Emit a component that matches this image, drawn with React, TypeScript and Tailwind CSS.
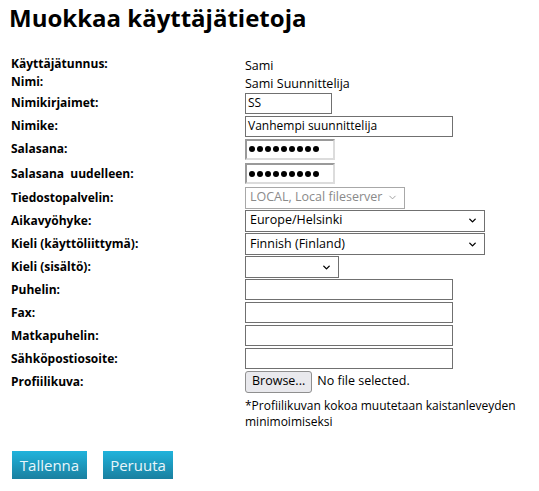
import { ChevronDown } from "lucide-react";

const font = { fontFamily: '"Open Sans", "Noto Sans", sans-serif' };

function TextBox({ w, value }: { w: string; value?: string }) {
  return (
    <div className={`flex h-[21px] items-center border border-[#707070] bg-white pl-[2px] text-[12px] text-black ${w}`}>
      {value}
    </div>
  );
}

function PasswordBox() {
  return (
    <div className="flex h-[21px] w-[90px] items-center gap-[2px] border-2 border-t-[#9a9a9a] border-l-[#9a9a9a] border-r-[#dcdcdc] border-b-[#dcdcdc] bg-white pl-[2px]">
      {Array.from({ length: 9 }).map((_, i) => (
        <span key={i} className="h-[6px] w-[6px] rounded-full bg-black" />
      ))}
    </div>
  );
}

function SelectBox({ w, value, disabled }: { w: string; value?: string; disabled?: boolean }) {
  return (
    <div
      className={`flex h-[22px] items-center justify-between border bg-white pl-[4px] pr-[6px] text-[12.5px] ${w} ${
        disabled ? "border-[#a8a8a8] text-[#8a8a8a]" : "border-[#707070] text-black"
      }`}
    >
      <span>{value}</span>
      <ChevronDown size={11} strokeWidth={disabled ? 2 : 3} className={disabled ? "text-[#9a9a9a]" : "text-black"} />
    </div>
  );
}

function Row({ label, h, children }: { label: string; h: string; children: React.ReactNode }) {
  return (
    <div className={`flex items-center ${h}`}>
      <div className="w-[234px] shrink-0 whitespace-pre text-[12px] font-bold text-black">{label}</div>
      <div>{children}</div>
    </div>
  );
}

export default function App() {
  return (
    <div className="min-h-[491px] bg-white pl-[11px] pt-[2px]" style={font}>
      <h1 className="ml-[-2px] text-[24px] leading-[32px] font-bold text-black">Muokkaa käyttäjätietoja</h1>

      <div className="mt-[21px] flex flex-col">
        <Row label="Käyttäjätunnus:" h="h-[18px]">
          <span className="text-[12.5px]">Sami</span>
        </Row>
        <Row label="Nimi:" h="h-[18px]">
          <span className="text-[12.5px]">Sami Suunnittelija</span>
        </Row>
        <Row label="Nimikirjaimet:" h="h-[24px]">
          <TextBox w="w-[87px]" value="SS" />
        </Row>
        <Row label="Nimike:" h="h-[22px]">
          <TextBox w="w-[208px]" value="Vanhempi suunnittelija" />
        </Row>
        <Row label="Salasana:" h="h-[24px]">
          <PasswordBox />
        </Row>
        <Row label="Salasana  uudelleen:" h="h-[25px]">
          <PasswordBox />
        </Row>
        <Row label="Tiedostopalvelin:" h="h-[23px]">
          <SelectBox w="w-[160px]" value="LOCAL, Local fileserver" disabled />
        </Row>
        <Row label="Aikavyöhyke:" h="h-[23px]">
          <SelectBox w="w-[240px]" value="Europe/Helsinki" />
        </Row>
        <Row label="Kieli (käyttöliittymä):" h="h-[24px]">
          <SelectBox w="w-[240px]" value="Finnish (Finland)" />
        </Row>
        <Row label="Kieli (sisältö):" h="h-[22px]">
          <SelectBox w="w-[94px]" />
        </Row>
        <Row label="Puhelin:" h="h-[23px]">
          <TextBox w="w-[208px]" />
        </Row>
        <Row label="Fax:" h="h-[23px]">
          <TextBox w="w-[208px]" />
        </Row>
        <Row label="Matkapuhelin:" h="h-[23px]">
          <TextBox w="w-[208px]" />
        </Row>
        <Row label="Sähköpostiosoite:" h="h-[23px]">
          <TextBox w="w-[208px]" />
        </Row>
        <Row label="Profiilikuva:" h="h-[23px]">
          <div className="flex items-center gap-[5px] text-[12.5px]">
            <button className="flex h-[22px] items-center rounded-[3px] border border-[#8f8f8f] bg-[#e9e9ed] px-[6px] text-[12.5px] text-black">
              Browse...
            </button>
            <span>No file selected.</span>
          </div>
        </Row>
        <div className="mt-[5px] flex">
          <div className="w-[234px] shrink-0" />
          <p className="w-[290px] text-[12px] leading-[16px] text-black">
            *Profiilikuvan kokoa muutetaan kaistanleveyden minimoimiseksi
          </p>
        </div>
      </div>

      <div className="mt-[21px] flex gap-[16px] pl-[1px]">
        <button className="h-[28px] w-[75px] bg-gradient-to-b from-[#20b3dc] to-[#1a80a0] text-[15px] text-[#e8f6fb]">
          Tallenna
        </button>
        <button className="h-[28px] w-[70px] bg-gradient-to-b from-[#20b3dc] to-[#1a80a0] text-[15px] text-[#e8f6fb]">
          Peruuta
        </button>
      </div>
    </div>
  );
}
